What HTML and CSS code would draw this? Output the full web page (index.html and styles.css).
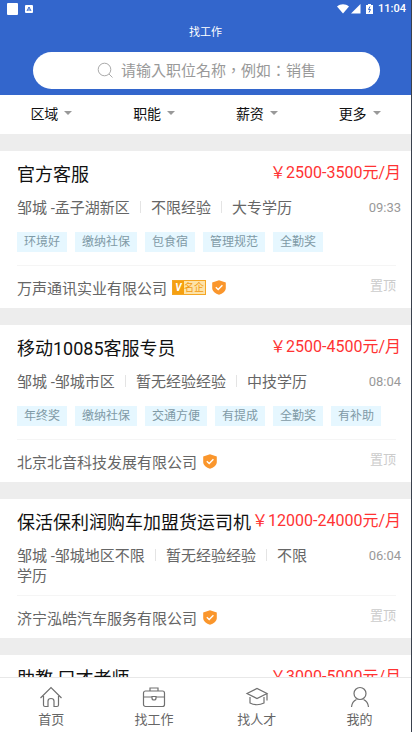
FILE: index.html
```
<!DOCTYPE html>
<html lang="zh-CN">
<head>
<meta charset="utf-8">
<meta name="viewport" content="width=device-width, initial-scale=1">
<title>找工作</title>
<link rel="stylesheet" href="styles.css">
</head>
<body>
<svg class="defs" aria-hidden="true">
  <symbol id="shield" viewBox="0 0 14 15">
    <path d="M7 .3 13.8 2.600V8c0 3.400-3.300 5.500-6.800 6.800C3.500 13.500.2 11.400.2 8V2.600z" fill="#fa962c"/>
    <path d="m3.800 7.200 2.400 2.300 4.200-4.200" fill="none" stroke="#fff" stroke-width="1.400"/>
  </symbol>
</svg>
<div class="app">
  <header class="top">
    <div class="status">
      <span class="notice"></span>
      <svg class="notice-app" viewBox="0 0 8 8" aria-hidden="true"><rect width="8" height="8" rx="1" fill="#fff"/><path d="M2 6 4 2l2 4M3 5h2" fill="none" stroke="#36c"/></svg>
      <svg class="wifi" viewBox="0 0 12 10" aria-hidden="true"><path d="M0 2.500C3.500-.5 8.500-.5 12 2.500L6 9.500z" fill="#fff"/></svg>
      <svg class="signal" viewBox="0 0 10 10" aria-hidden="true"><path d="M9.500 0v9.500H0z" fill="#fff"/></svg>
      <svg class="battery" viewBox="0 0 7 10" aria-hidden="true"><path d="M2 0h3v1h2v9H0V1h2z" fill="#fff"/><path d="M4 2.500 2.500 5.500h2L3 8.500" fill="none" stroke="#36c"/></svg>
      <time class="clock">11:04</time>
    </div>
    <h1 class="title">找工作</h1>
    <label class="search">
      <svg class="search-icon" viewBox="0 0 17 17" aria-hidden="true"><circle cx="7.500" cy="7.500" r="6.300"/><path d="m12 12 3.500 3.500"/></svg>
      <input class="search-input" type="text" lang="zh-Hant" aria-label="搜索职位" placeholder="请输入职位名称，例如：销售">
    </label>
  </header>
  <nav class="filters" aria-label="筛选">
    <button class="filter" type="button">区域</button>
    <button class="filter" type="button">职能</button>
    <button class="filter" type="button">薪资</button>
    <button class="filter" type="button">更多</button>
  </nav>
  <main class="jobs">
    <article class="job">
      <div class="head"><h2 class="name">官方客服</h2><span class="pay">￥2500-3500元/月</span></div>
      <div class="info"><p class="facts">邹城 -孟子湖新区<i class="bar"></i>不限经验<i class="bar"></i>大专学历</p><time class="time">09:33</time></div>
      <ul class="tags"><li>环境好</li><li>缴纳社保</li><li>包食宿</li><li>管理规范</li><li>全勤奖</li></ul>
      <div class="foot"><a class="company" href="#">万声通讯实业有限公司</a><span class="famous"><b class="vip">V</b><span class="famous-text">名企</span></span><svg class="shield" aria-hidden="true"><use href="#shield"/></svg><span class="pinned">置顶</span></div>
    </article>
    <article class="job">
      <div class="head"><h2 class="name">移动10085客服专员</h2><span class="pay">￥2500-4500元/月</span></div>
      <div class="info"><p class="facts">邹城 -邹城市区<i class="bar"></i>暂无经验经验<i class="bar"></i>中技学历</p><time class="time">08:04</time></div>
      <ul class="tags"><li>年终奖</li><li>缴纳社保</li><li>交通方便</li><li>有提成</li><li>全勤奖</li><li>有补助</li></ul>
      <div class="foot"><a class="company" href="#">北京北音科技发展有限公司</a><svg class="shield" aria-hidden="true"><use href="#shield"/></svg><span class="pinned">置顶</span></div>
    </article>
    <article class="job">
      <div class="head"><h2 class="name">保活保利润购车加盟货运司机</h2><span class="pay">￥12000-24000元/月</span></div>
      <div class="info"><p class="facts">邹城 -邹城地区不限<i class="bar"></i>暂无经验经验<i class="bar"></i>不限学历</p><time class="time">06:04</time></div>
      <div class="foot"><a class="company" href="#">济宁泓皓汽车服务有限公司</a><svg class="shield" aria-hidden="true"><use href="#shield"/></svg><span class="pinned">置顶</span></div>
    </article>
    <article class="job">
      <div class="head"><h2 class="name">助教 口才老师</h2><span class="pay">￥3000-5000元/月</span></div>
    </article>
  </main>
  <nav class="tabs" aria-label="主导航">
    <a class="tab" href="#"><svg class="tab-icon" viewBox="0 0 24 22" aria-hidden="true"><path d="M1.500 12 12 1.500 22.500 12M4.500 10v9q0 1.500 1.500 1.500h3V15q0-2.500 3-2.500t3 2.500v5.500h3q1.500 0 1.500-1.500v-9"/></svg>首页</a>
    <a class="tab" href="#"><svg class="tab-icon" viewBox="0 0 24 22" aria-hidden="true"><rect x="1.500" y="5" width="21" height="15.500" rx="2"/><path d="M8 5V2h8v3M1.500 11H10m4 0h8.500M10 10.500h4v1.500q0 2-2 2t-2-2z"/></svg>找工作</a>
    <a class="tab" href="#"><svg class="tab-icon" viewBox="0 0 24 22" aria-hidden="true"><path d="m2 7.500 10-5 10 5-10 5zM22 7.500v7M5 11v6q7 3.500 14 0v-6"/></svg>找人才</a>
    <a class="tab" href="#"><svg class="tab-icon" viewBox="0 0 24 22" aria-hidden="true"><circle cx="12" cy="7.500" r="6"/><path d="M3.500 21q.5-5.500 5-7.500M20.500 21q-.5-5.500-5-7.500"/></svg>我的</a>
  </nav>
</div>
</body>
</html>
```

FILE: styles.css
```
* { box-sizing: border-box; }

body {
  margin: 0;
  color: #666;
  background: #ededed;
  font-family: Roboto, "Noto Sans CJK SC", sans-serif;
  font-size: 15px;
}

h1, h2, p, ul { margin: 0; padding: 0; font-weight: 400; }
a { color: inherit; text-decoration: none; }
button, input { font: inherit; border: 0; background: none; padding: 0; }

.defs { position: absolute; width: 0; height: 0; }

.app {
  display: flex;
  flex-direction: column;
  height: 100vh;
  overflow: hidden;
  border-right: 1px solid #3a414d;
}

.top { flex: none; background: #36c; color: #fff; padding-bottom: 6px; }

.status {
  display: flex;
  align-items: center;
  height: 18px;
  padding: 0 5px 0 7px;
}
.notice { width: 11px; height: 12px; background: #fff; border-radius: 1px; }
.notice-app { width: 8px; height: 8px; margin-left: 7px; }
.wifi { width: 12px; height: 10px; margin-left: auto; }
.signal { width: 10px; height: 10px; margin-left: 2px; }
.battery { width: 7px; height: 10px; margin: 0 5px; }
.clock { font-size: 11px; font-weight: 500; line-height: 18px; }

.title { font-size: 11px; line-height: 30px; text-align: center; height: 34px; }

.search {
  display: flex;
  align-items: center;
  justify-content: center;
  gap: 7px;
  height: 37px;
  margin: 0 31px 0 33px;
  border-radius: 19px;
  background: #fff;
}
.search-icon { width: 17px; height: 17px; fill: none; stroke: #aaa; stroke-width: 1; }
.search-input {
  width: 195px;
  outline: 0;
  color: #666;
  font-family: Roboto, "Noto Sans CJK TC", sans-serif;
}
.search-input::placeholder { color: #999; opacity: 1; }

.filters { flex: none; display: flex; height: 39px; padding-bottom: 3px; background: #fff; }
.filter {
  flex: 1;
  display: flex;
  align-items: center;
  justify-content: center;
  gap: 6px;
  font-size: 14px;
  color: #111;
}
.filter::after {
  content: "";
  border: 4px solid transparent;
  border-top-color: #999;
  border-bottom: 0;
}

.jobs { flex: 1; min-height: 0; overflow: hidden; }

.job { margin-top: 17px; padding: 11px 10px 0 17px; background: #fff; }

.head { display: flex; justify-content: space-between; height: 26px; white-space: nowrap; }
.name { flex: 0 1 auto; min-width: 0; font-size: 18px; line-height: 26px; color: #111; }
.pay { margin-left: auto; font-size: 16px; line-height: 22px; color: #f33; }

.info { display: flex; justify-content: space-between; padding-top: 10px; }
.facts { flex: 0 1 300px; line-height: 20px; }
.bar {
  display: inline-block;
  width: 1px;
  height: 12px;
  margin: 0 10px;
  background: #e4e4e4;
}
.time { font-size: 13px; line-height: 20px; color: #999; }

.tags { display: flex; gap: 8px; padding: 14px 0 4px; list-style: none; }
.tags li {
  padding: 0 7px;
  font-size: 12px;
  line-height: 20px;
  color: #7f9aa6;
  background: #e6f7ff;
}

.foot {
  display: flex;
  align-items: center;
  height: 43px;
  margin: 9px 5px 0 0;
  border-top: 1px solid #f5f5f5;
}
.famous {
  display: flex;
  width: 34px;
  height: 15px;
  margin-left: 5px;
  border: 1px solid #f5a623;
  background: #fde3a8;
  color: #f39b12;
  font-size: 10px;
  line-height: 13px;
}
.vip { width: 11px; background: #f5a010; color: #fff; font-style: italic; text-align: center; }
.shield { width: 14px; height: 15px; margin-left: 6px; }
.pinned { align-self: flex-start; margin-left: auto; font-size: 13px; line-height: 40px; color: #ccc; }

.tabs {
  flex: none;
  display: flex;
  height: 55px;
  background: #fff;
  border-top: 1px solid #e8e8e8;
}
.tab {
  flex: 1;
  display: flex;
  flex-direction: column;
  align-items: center;
  padding-top: 8px;
  font-size: 13px;
  line-height: 24px;
}
.tab-icon { width: 24px; height: 22px; fill: none; stroke: #707070; stroke-width: 1.2; }
```
